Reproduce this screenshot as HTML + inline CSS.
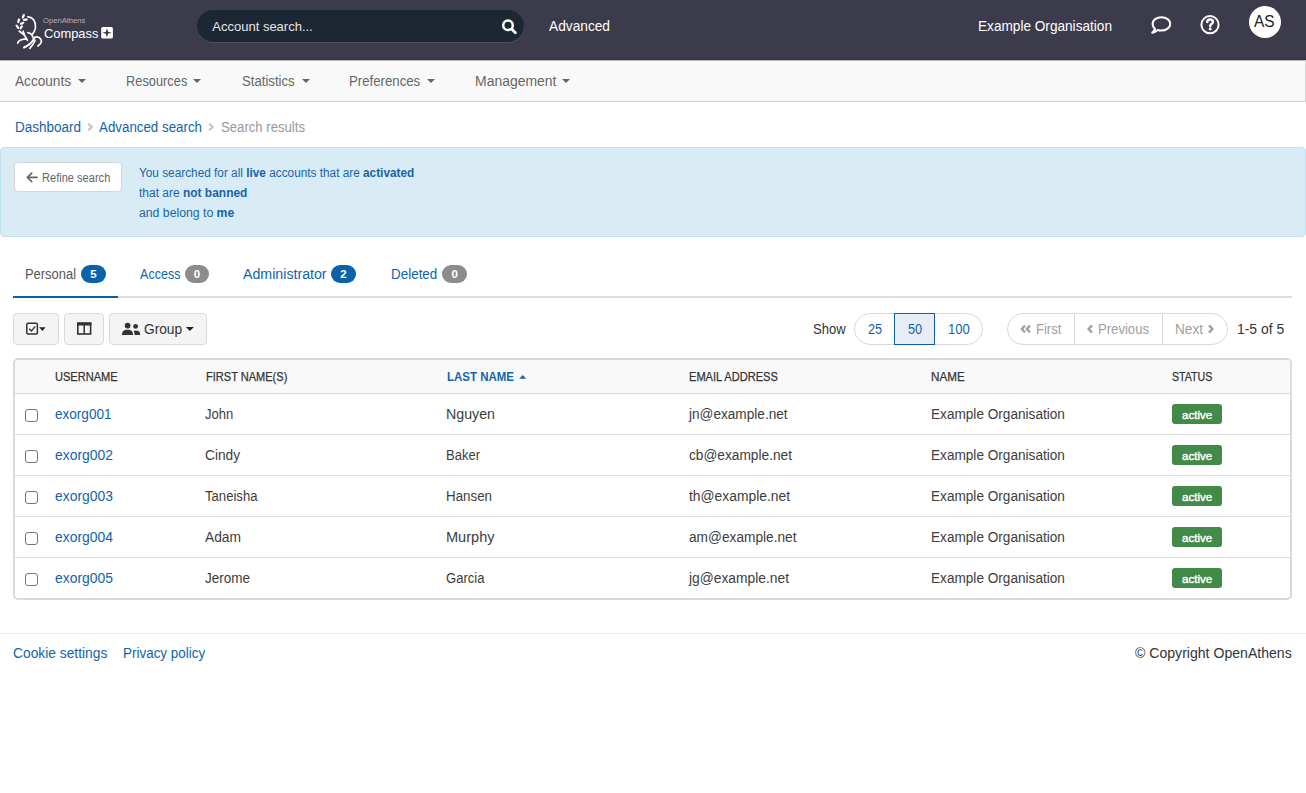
<!DOCTYPE html><html><head><meta charset="utf-8"><style>
*{box-sizing:border-box;margin:0;padding:0}
html,body{width:1306px;height:793px;overflow:hidden;background:#fff;font-family:"Liberation Sans",sans-serif;color:#333}
.t{position:absolute;white-space:nowrap;line-height:1}
.t b{font-weight:bold}
.r{position:absolute}
svg{position:absolute;left:0;top:0;overflow:visible}
</style></head><body>
<div class="r" style="left:0;top:0;width:1306px;height:60px;background:#3c3b4c"></div>
<div class="r" style="left:0;top:59px;width:1306px;height:1px;background:#343341"></div>
<div class="r" style="left:197px;top:10px;width:327px;height:32px;border-radius:16px;background:#1d2733;box-shadow:0 0.8px 0 rgba(255,255,255,.14)"></div>
<div class="t " style="left:212.30px;top:20.20px;font-size:13px;color:#e4e6ea;">Account search...</div>
<div class="t " style="left:549.00px;top:18.95px;font-size:14px;color:#fff;transform:scaleX(0.9796);transform-origin:0 0;">Advanced</div>
<div class="t " style="left:977.50px;top:18.95px;font-size:14px;color:#fff;transform:scaleX(0.9728);transform-origin:0 0;">Example Organisation</div>
<div class="r" style="left:1249px;top:6px;width:32px;height:32px;border-radius:50%;background:#fff"></div>
<div class="t " style="left:1254.40px;top:14.26px;font-size:16px;color:#222;transform:scaleX(0.9652);transform-origin:0 0;">AS</div>
<div class="t " style="left:43.30px;top:17.17px;font-size:7.6px;color:#b4b4be;transform:scaleX(1.0034);transform-origin:0 0;">OpenAthens</div>
<div class="t " style="left:43.60px;top:26.70px;font-size:13px;color:#fff;transform:scaleX(0.9908);transform-origin:0 0;">Compass</div>
<svg width="1306" height="60" style="position:absolute;left:0;top:0">
<g fill="none" stroke="#fff" stroke-linecap="round" stroke-width="1.7">
<path d="M27.9 16.8 C31.5 17.2 34.5 19.8 35.2 23.5 C35.8 26.5 35.6 29 34.3 31.3 C33.5 32.8 32.6 33.8 31.7 34.5"/>
<path d="M31.7 34.5 C30.5 33.8 29.2 33.2 27.9 32.6"/>
<path d="M31.7 34.5 C32.3 35.6 32.8 36.8 33.2 37.9"/>
<path d="M19.3 31.2 C20.8 32.6 22.5 33.8 24.3 34.8"/>
<path d="M23.1 31.2 C23.5 32.4 24 33.6 24.3 34.8"/>
<path d="M24.3 34.8 C25.3 36.7 26.4 38.6 27.4 40.3"/>
<path d="M17.8 43.1 C18 41 19.4 39.5 25.5 38.8"/>
<path d="M24 47.5 C28.5 45.6 32 42.5 34.1 38.8" stroke-width="2"/>
<path d="M34.6 37.4 C37 36.4 39.6 37.4 40.8 39.3 C41.9 41 41.3 43.6 38 46"/>
<path d="M29.8 48.4 C32 46.2 33.8 43.5 35.1 40.3"/>
</g>
<g fill="#fff">
<ellipse cx="23.3" cy="16.3" rx="1.2" ry="2.6" transform="rotate(25 23.3 16.3)"/>
<ellipse cx="25.4" cy="19.7" rx="2.6" ry="1.2" transform="rotate(-8 25.4 19.7)"/>
<ellipse cx="18.6" cy="20.7" rx="1.2" ry="2.5" transform="rotate(12 18.6 20.7)"/>
<ellipse cx="22.1" cy="23.3" rx="2.5" ry="1.2" transform="rotate(-22 22.1 23.3)"/>
<ellipse cx="17.4" cy="26.8" rx="1.2" ry="2.6" transform="rotate(-38 17.4 26.8)"/>
<ellipse cx="21.2" cy="27.4" rx="2.4" ry="1.2" transform="rotate(-55 21.2 27.4)"/>
</g>
<rect x="101.2" y="27" width="11.7" height="11.6" rx="1.6" fill="#fff"/>
<path d="M107 28.3 L108.1 31.8 L111.7 32.8 L108.1 33.8 L107 37.4 L105.9 33.8 L102.3 32.8 L105.9 31.8 Z" fill="#3c3b4c"/>
<g fill="none" stroke="#fff">
<circle cx="508" cy="25.2" r="4.8" stroke-width="2.5"/>
<path d="M511.6 28.9 L515.4 32.7" stroke-width="2.8" stroke-linecap="round"/>
<path d="M1161.4 17.2 C1166.3 17.2 1170.2 20.2 1170.2 23.9 C1170.2 27.6 1166.3 30.6 1161.4 30.6 C1160.1 30.6 1158.9 30.4 1157.8 30 C1156.4 31.2 1154.6 32.4 1152.2 32.7 C1153.5 31.6 1154.5 30.3 1155 28.9 C1153.5 27.6 1152.6 25.9 1152.6 23.9 C1152.6 20.2 1156.5 17.2 1161.4 17.2 Z" stroke-width="2" stroke-linejoin="round"/>
<circle cx="1210" cy="24.7" r="8.6" stroke-width="2"/>
</g>
<path d="M1207.3 22.1 C1207.3 20.5 1208.5 19.6 1210.1 19.6 C1211.8 19.6 1212.9 20.6 1212.9 22 C1212.9 23.6 1211.2 23.9 1210.5 24.9 L1210.2 26.2" fill="none" stroke="#fff" stroke-width="2.5" stroke-linecap="round"/>
<circle cx="1210.2" cy="28.9" r="1.5" fill="#fff"/>
</svg>
<div class="r" style="left:0;top:60px;width:1306px;height:42px;background:linear-gradient(#b9b9be 0,#b9b9be 1px,#f7f7f7 1px,#f7f7f7 2px,#fbfbfb 2px,#fbfbfb 3px,#f9f9f9 3px);border-bottom:1px solid #d4d4d4;border-right:1px solid #d4d4d4"></div>
<div class="t " style="left:15.20px;top:74.15px;font-size:14px;color:#666;transform:scaleX(0.9724);transform-origin:0 0;">Accounts</div>
<div class="r" style="left:78.0px;top:78.6px;width:0;height:0;border-left:4px solid transparent;border-right:4px solid transparent;border-top:4px solid #666"></div>
<div class="t " style="left:125.90px;top:74.15px;font-size:14px;color:#666;transform:scaleX(0.9160);transform-origin:0 0;">Resources</div>
<div class="r" style="left:193.0px;top:78.6px;width:0;height:0;border-left:4px solid transparent;border-right:4px solid transparent;border-top:4px solid #666"></div>
<div class="t " style="left:241.60px;top:74.15px;font-size:14px;color:#666;transform:scaleX(0.9390);transform-origin:0 0;">Statistics</div>
<div class="r" style="left:302.2px;top:78.6px;width:0;height:0;border-left:4px solid transparent;border-right:4px solid transparent;border-top:4px solid #666"></div>
<div class="t " style="left:349.00px;top:74.15px;font-size:14px;color:#666;transform:scaleX(0.9433);transform-origin:0 0;">Preferences</div>
<div class="r" style="left:427.0px;top:78.6px;width:0;height:0;border-left:4px solid transparent;border-right:4px solid transparent;border-top:4px solid #666"></div>
<div class="t " style="left:474.50px;top:74.15px;font-size:14px;color:#666;transform:scaleX(0.9973);transform-origin:0 0;">Management</div>
<div class="r" style="left:562.0px;top:78.6px;width:0;height:0;border-left:4px solid transparent;border-right:4px solid transparent;border-top:4px solid #666"></div>
<div class="t " style="left:15.40px;top:119.95px;font-size:14px;color:#1164a9;transform:scaleX(0.9636);transform-origin:0 0;">Dashboard</div>
<div class="t " style="left:99.30px;top:119.95px;font-size:14px;color:#1164a9;transform:scaleX(0.9521);transform-origin:0 0;">Advanced search</div>
<div class="t " style="left:220.60px;top:119.95px;font-size:14px;color:#999;transform:scaleX(0.9387);transform-origin:0 0;">Search results</div>
<svg width="1306" height="793"><g fill="none" stroke="#c2c2c2" stroke-width="2.1"><path d="M88.2 123.8 L91.8 127 L88.2 130.2"/><path d="M209.2 123.8 L212.8 127 L209.2 130.2"/></g></svg>
<div class="r" style="left:0;top:147px;width:1306px;height:90px;background:#d9ecf6;border:1px solid #bfe3ef;border-radius:4px"></div>
<div class="r" style="left:14px;top:162px;width:108px;height:29.5px;background:#fff;border:1px solid #d6d6d6;border-radius:4px"></div>
<svg width="1306" height="793"><g fill="none" stroke="#666" stroke-width="1.7" stroke-linecap="round" stroke-linejoin="round"><path d="M27.5 177.4 L37 177.4"/><path d="M31.7 173.2 L27.5 177.4 L31.7 181.6"/></g></svg>
<div class="t " style="left:41.70px;top:171.52px;font-size:12.5px;color:#666;transform:scaleX(0.8856);transform-origin:0 0;">Refine search</div>
<div class="t " style="left:139.20px;top:166.62px;font-size:12.5px;color:#1765a8;transform:scaleX(0.9445);transform-origin:0 0;">You searched for all <b>live</b> accounts that are <b>activated</b></div>
<div class="t " style="left:139.20px;top:186.62px;font-size:12.5px;color:#1765a8;transform:scaleX(0.9575);transform-origin:0 0;">that are <b>not banned</b></div>
<div class="t " style="left:139.20px;top:207.42px;font-size:12.5px;color:#1765a8;transform:scaleX(0.9794);transform-origin:0 0;">and belong to <b>me</b></div>
<div class="t " style="left:25.40px;top:267.15px;font-size:14px;color:#555;transform:scaleX(0.9230);transform-origin:0 0;">Personal</div>
<div class="t " style="left:140.00px;top:267.15px;font-size:14px;color:#1164a9;transform:scaleX(0.8975);transform-origin:0 0;">Access</div>
<div class="t " style="left:243.30px;top:267.15px;font-size:14px;color:#1164a9;transform:scaleX(1.0137);transform-origin:0 0;">Administrator</div>
<div class="t " style="left:390.90px;top:267.15px;font-size:14px;color:#1164a9;transform:scaleX(0.9595);transform-origin:0 0;">Deleted</div>
<div class="r" style="left:81.0px;top:265px;width:25.0px;height:18px;border-radius:9px;background:#0a62ab"></div>
<div class="t " style="left:90.30px;top:268.57px;font-size:11.5px;color:#fff;"><b>5</b></div>
<div class="r" style="left:185.0px;top:265px;width:24.0px;height:18px;border-radius:9px;background:#8c8c8c"></div>
<div class="t " style="left:193.80px;top:268.57px;font-size:11.5px;color:#fff;"><b>0</b></div>
<div class="r" style="left:331.0px;top:265px;width:25.0px;height:18px;border-radius:9px;background:#0a62ab"></div>
<div class="t " style="left:340.30px;top:268.57px;font-size:11.5px;color:#fff;"><b>2</b></div>
<div class="r" style="left:442.4px;top:265px;width:24.6px;height:18px;border-radius:9px;background:#8c8c8c"></div>
<div class="t " style="left:451.50px;top:268.57px;font-size:11.5px;color:#fff;"><b>0</b></div>
<div class="r" style="left:13px;top:296px;width:1279px;height:2px;background:#dedede"></div>
<div class="r" style="left:13px;top:296px;width:105px;height:2px;background:#0a5fa8"></div>
<div class="r" style="left:13px;top:313px;width:46.0px;height:32px;background:#f4f4f4;border:1px solid #dadada;border-radius:4px"></div>
<div class="r" style="left:64px;top:313px;width:40.0px;height:32px;background:#f4f4f4;border:1px solid #dadada;border-radius:4px"></div>
<div class="r" style="left:109px;top:313px;width:97.5px;height:32px;background:#f4f4f4;border:1px solid #dadada;border-radius:4px"></div>
<svg width="1306" height="793">
<rect x="26.8" y="323.2" width="10.6" height="10.8" rx="1.2" fill="none" stroke="#333" stroke-width="1.5"/>
<path d="M29.2 328.7 L31.4 330.9 L35.3 326.4" fill="none" stroke="#333" stroke-width="1.4"/>
<path d="M39.2 327.2 L45.6 327.2 L42.4 331 Z" fill="#222"/>
<rect x="77.8" y="323.2" width="12.8" height="10.8" fill="none" stroke="#333" stroke-width="1.6"/>
<rect x="77" y="322.5" width="14.4" height="3" fill="#333"/>
<path d="M84.2 325 L84.2 334" stroke="#333" stroke-width="1.5"/>
<circle cx="127.6" cy="325.6" r="2.9" fill="#333"/>
<path d="M122 335 C122 331.3 123.6 329.8 127.6 329.8 C131.4 329.8 133 331.3 133 335 Z" fill="#333"/>
<circle cx="135.6" cy="326.4" r="2.4" fill="#333"/>
<path d="M134.6 335 L140.2 335 C140.2 332 139.2 330.6 136 330.4 C134.8 330.4 134 330.7 133.6 331 C134.3 332.1 134.6 333.3 134.6 335 Z" fill="#333"/>
<path d="M185.9 327 L193.9 327 L189.9 331 Z" fill="#222"/>
</svg>
<div class="t " style="left:143.90px;top:321.85px;font-size:14px;color:#333;transform:scaleX(0.9792);transform-origin:0 0;">Group</div>
<div class="t " style="left:813.00px;top:322.35px;font-size:14px;color:#333;transform:scaleX(0.9337);transform-origin:0 0;">Show</div>
<div class="r" style="left:854px;top:313px;width:129px;height:32px;border:1px solid #d9d9d9;border-radius:16px;background:#fff"></div>
<div class="r" style="left:894px;top:313px;width:41px;height:32px;border:1.5px solid #0d5fa6;background:#e8ecf6"></div>
<div class="t " style="left:867.60px;top:322.15px;font-size:14px;color:#1164a9;transform:scaleX(0.9119);transform-origin:0 0;">25</div>
<div class="t " style="left:907.90px;top:322.15px;font-size:14px;color:#1164a9;transform:scaleX(0.9119);transform-origin:0 0;">50</div>
<div class="t " style="left:948.30px;top:322.15px;font-size:14px;color:#1164a9;transform:scaleX(0.9333);transform-origin:0 0;">100</div>
<div class="r" style="left:1007px;top:313px;width:221px;height:32px;border:1px solid #d9d9d9;border-radius:16px;background:#fff"></div>
<div class="r" style="left:1074px;top:313px;width:1px;height:32px;background:#d9d9d9"></div>
<div class="r" style="left:1162px;top:313px;width:1px;height:32px;background:#d9d9d9"></div>
<div class="t " style="left:1036.30px;top:322.15px;font-size:14px;color:#a0a0a0;transform:scaleX(0.9297);transform-origin:0 0;">First</div>
<div class="t " style="left:1098.30px;top:322.15px;font-size:14px;color:#a0a0a0;transform:scaleX(0.9363);transform-origin:0 0;">Previous</div>
<div class="t " style="left:1175.30px;top:322.15px;font-size:14px;color:#a0a0a0;transform:scaleX(0.9727);transform-origin:0 0;">Next</div>
<svg width="1306" height="793"><g fill="none" stroke="#a0a0a0" stroke-width="2.3" stroke-linejoin="miter">
<path d="M1025 325.6 L1021.8 329 L1025 332.4"/><path d="M1030 325.6 L1026.8 329 L1030 332.4"/>
<path d="M1092 325.4 L1088.6 329 L1092 332.6"/>
<path d="M1209 325.4 L1212.4 329 L1209 332.6"/>
</g></svg>
<div class="t " style="left:1236.60px;top:322.15px;font-size:14px;color:#333;transform:scaleX(0.9921);transform-origin:0 0;">1-5 of 5</div>
<div class="r" style="left:13px;top:358px;width:1279px;height:242px;border:2px solid #dadada;border-radius:5px;background:#fff;overflow:hidden"><div class="r" style="left:0;top:0;width:1275px;height:35px;background:#f9f9f9"></div></div>
<div class="r" style="left:15px;top:393px;width:1275px;height:1px;background:#dedede"></div>
<div class="r" style="left:15px;top:434px;width:1275px;height:1px;background:#dedede"></div>
<div class="r" style="left:15px;top:475px;width:1275px;height:1px;background:#dedede"></div>
<div class="r" style="left:15px;top:516px;width:1275px;height:1px;background:#dedede"></div>
<div class="r" style="left:15px;top:557px;width:1275px;height:1px;background:#dedede"></div>
<div class="t " style="left:55.30px;top:370.00px;font-size:13px;color:#333;transform:scaleX(0.8510);transform-origin:0 0;-webkit-text-stroke:0.25px #333;">USERNAME</div>
<div class="t " style="left:205.60px;top:370.00px;font-size:13px;color:#333;transform:scaleX(0.8485);transform-origin:0 0;-webkit-text-stroke:0.25px #333;">FIRST NAME(S)</div>
<div class="t " style="left:446.80px;top:370.00px;font-size:13px;color:#1164a9;transform:scaleX(0.8836);transform-origin:0 0;"><b>LAST NAME</b></div>
<svg width="1306" height="793"><path d="M519.2 378.7 L526.2 378.7 L522.7 375 Z" fill="#1164a9"/></svg>
<div class="t " style="left:688.60px;top:370.00px;font-size:13px;color:#333;transform:scaleX(0.8516);transform-origin:0 0;-webkit-text-stroke:0.25px #333;">EMAIL ADDRESS</div>
<div class="t " style="left:930.50px;top:370.00px;font-size:13px;color:#333;transform:scaleX(0.8972);transform-origin:0 0;-webkit-text-stroke:0.25px #333;">NAME</div>
<div class="t " style="left:1172.30px;top:370.00px;font-size:13px;color:#333;transform:scaleX(0.8186);transform-origin:0 0;-webkit-text-stroke:0.25px #333;">STATUS</div>
<div class="r" style="left:25px;top:409px;width:13px;height:13px;border:1px solid #767676;border-radius:3px;background:#fff"></div>
<div class="t " style="left:55.30px;top:407.05px;font-size:14px;color:#1164a9;transform:scaleX(0.9678);transform-origin:0 0;">exorg001</div>
<div class="t " style="left:205.10px;top:407.05px;font-size:14px;color:#3d3d3d;transform:scaleX(0.9322);transform-origin:0 0;">John</div>
<div class="t " style="left:446.40px;top:407.05px;font-size:14px;color:#3d3d3d;transform:scaleX(1.0154);transform-origin:0 0;">Nguyen</div>
<div class="t " style="left:688.60px;top:407.05px;font-size:14px;color:#3d3d3d;transform:scaleX(0.9726);transform-origin:0 0;">jn@example.net</div>
<div class="t " style="left:930.50px;top:407.05px;font-size:14px;color:#3d3d3d;transform:scaleX(0.9721);transform-origin:0 0;">Example Organisation</div>
<div class="r" style="left:1172px;top:404px;width:50px;height:20px;border-radius:3px;background:#438a48"></div>
<div class="t " style="left:1182.00px;top:409.53px;font-size:11.3px;color:#fff;transform:scaleX(1.0231);transform-origin:0 0;-webkit-text-stroke:0.40px #fff;">active</div>
<div class="r" style="left:25px;top:450px;width:13px;height:13px;border:1px solid #767676;border-radius:3px;background:#fff"></div>
<div class="t " style="left:55.30px;top:448.05px;font-size:14px;color:#1164a9;transform:scaleX(0.9935);transform-origin:0 0;">exorg002</div>
<div class="t " style="left:205.10px;top:448.05px;font-size:14px;color:#3d3d3d;transform:scaleX(0.9778);transform-origin:0 0;">Cindy</div>
<div class="t " style="left:446.40px;top:448.05px;font-size:14px;color:#3d3d3d;transform:scaleX(0.9297);transform-origin:0 0;">Baker</div>
<div class="t " style="left:688.60px;top:448.05px;font-size:14px;color:#3d3d3d;transform:scaleX(0.9784);transform-origin:0 0;">cb@example.net</div>
<div class="t " style="left:930.50px;top:448.05px;font-size:14px;color:#3d3d3d;transform:scaleX(0.9721);transform-origin:0 0;">Example Organisation</div>
<div class="r" style="left:1172px;top:445px;width:50px;height:20px;border-radius:3px;background:#438a48"></div>
<div class="t " style="left:1182.00px;top:450.53px;font-size:11.3px;color:#fff;transform:scaleX(1.0231);transform-origin:0 0;-webkit-text-stroke:0.40px #fff;">active</div>
<div class="r" style="left:25px;top:491px;width:13px;height:13px;border:1px solid #767676;border-radius:3px;background:#fff"></div>
<div class="t " style="left:55.30px;top:489.05px;font-size:14px;color:#1164a9;transform:scaleX(0.9935);transform-origin:0 0;">exorg003</div>
<div class="t " style="left:205.10px;top:489.05px;font-size:14px;color:#3d3d3d;transform:scaleX(0.9368);transform-origin:0 0;">Taneisha</div>
<div class="t " style="left:446.40px;top:489.05px;font-size:14px;color:#3d3d3d;transform:scaleX(0.9533);transform-origin:0 0;">Hansen</div>
<div class="t " style="left:688.60px;top:489.05px;font-size:14px;color:#3d3d3d;transform:scaleX(0.9887);transform-origin:0 0;">th@example.net</div>
<div class="t " style="left:930.50px;top:489.05px;font-size:14px;color:#3d3d3d;transform:scaleX(0.9721);transform-origin:0 0;">Example Organisation</div>
<div class="r" style="left:1172px;top:486px;width:50px;height:20px;border-radius:3px;background:#438a48"></div>
<div class="t " style="left:1182.00px;top:491.53px;font-size:11.3px;color:#fff;transform:scaleX(1.0231);transform-origin:0 0;-webkit-text-stroke:0.40px #fff;">active</div>
<div class="r" style="left:25px;top:532px;width:13px;height:13px;border:1px solid #767676;border-radius:3px;background:#fff"></div>
<div class="t " style="left:55.30px;top:530.05px;font-size:14px;color:#1164a9;transform:scaleX(0.9935);transform-origin:0 0;">exorg004</div>
<div class="t " style="left:205.10px;top:530.05px;font-size:14px;color:#3d3d3d;transform:scaleX(0.9843);transform-origin:0 0;">Adam</div>
<div class="t " style="left:446.40px;top:530.05px;font-size:14px;color:#3d3d3d;transform:scaleX(1.0389);transform-origin:0 0;">Murphy</div>
<div class="t " style="left:688.60px;top:530.05px;font-size:14px;color:#3d3d3d;transform:scaleX(0.9779);transform-origin:0 0;">am@example.net</div>
<div class="t " style="left:930.50px;top:530.05px;font-size:14px;color:#3d3d3d;transform:scaleX(0.9721);transform-origin:0 0;">Example Organisation</div>
<div class="r" style="left:1172px;top:527px;width:50px;height:20px;border-radius:3px;background:#438a48"></div>
<div class="t " style="left:1182.00px;top:532.53px;font-size:11.3px;color:#fff;transform:scaleX(1.0231);transform-origin:0 0;-webkit-text-stroke:0.40px #fff;">active</div>
<div class="r" style="left:25px;top:573px;width:13px;height:13px;border:1px solid #767676;border-radius:3px;background:#fff"></div>
<div class="t " style="left:55.30px;top:571.05px;font-size:14px;color:#1164a9;transform:scaleX(0.9935);transform-origin:0 0;">exorg005</div>
<div class="t " style="left:205.10px;top:571.05px;font-size:14px;color:#3d3d3d;transform:scaleX(0.9639);transform-origin:0 0;">Jerome</div>
<div class="t " style="left:446.40px;top:571.05px;font-size:14px;color:#3d3d3d;transform:scaleX(0.9337);transform-origin:0 0;">Garcia</div>
<div class="t " style="left:688.60px;top:571.05px;font-size:14px;color:#3d3d3d;transform:scaleX(0.9864);transform-origin:0 0;">jg@example.net</div>
<div class="t " style="left:930.50px;top:571.05px;font-size:14px;color:#3d3d3d;transform:scaleX(0.9721);transform-origin:0 0;">Example Organisation</div>
<div class="r" style="left:1172px;top:568px;width:50px;height:20px;border-radius:3px;background:#438a48"></div>
<div class="t " style="left:1182.00px;top:573.53px;font-size:11.3px;color:#fff;transform:scaleX(1.0231);transform-origin:0 0;-webkit-text-stroke:0.40px #fff;">active</div>
<div class="r" style="left:0;top:633px;width:1306px;height:1px;background:#e9e9e9"></div>
<div class="t " style="left:13.20px;top:646.15px;font-size:14px;color:#1164a9;transform:scaleX(0.9852);transform-origin:0 0;">Cookie settings</div>
<div class="t " style="left:122.80px;top:646.15px;font-size:14px;color:#1164a9;transform:scaleX(0.9605);transform-origin:0 0;">Privacy policy</div>
<div class="t " style="left:1135.00px;top:645.75px;font-size:14px;color:#333;transform:scaleX(1.0055);transform-origin:0 0;">© Copyright OpenAthens</div>
</body></html>
